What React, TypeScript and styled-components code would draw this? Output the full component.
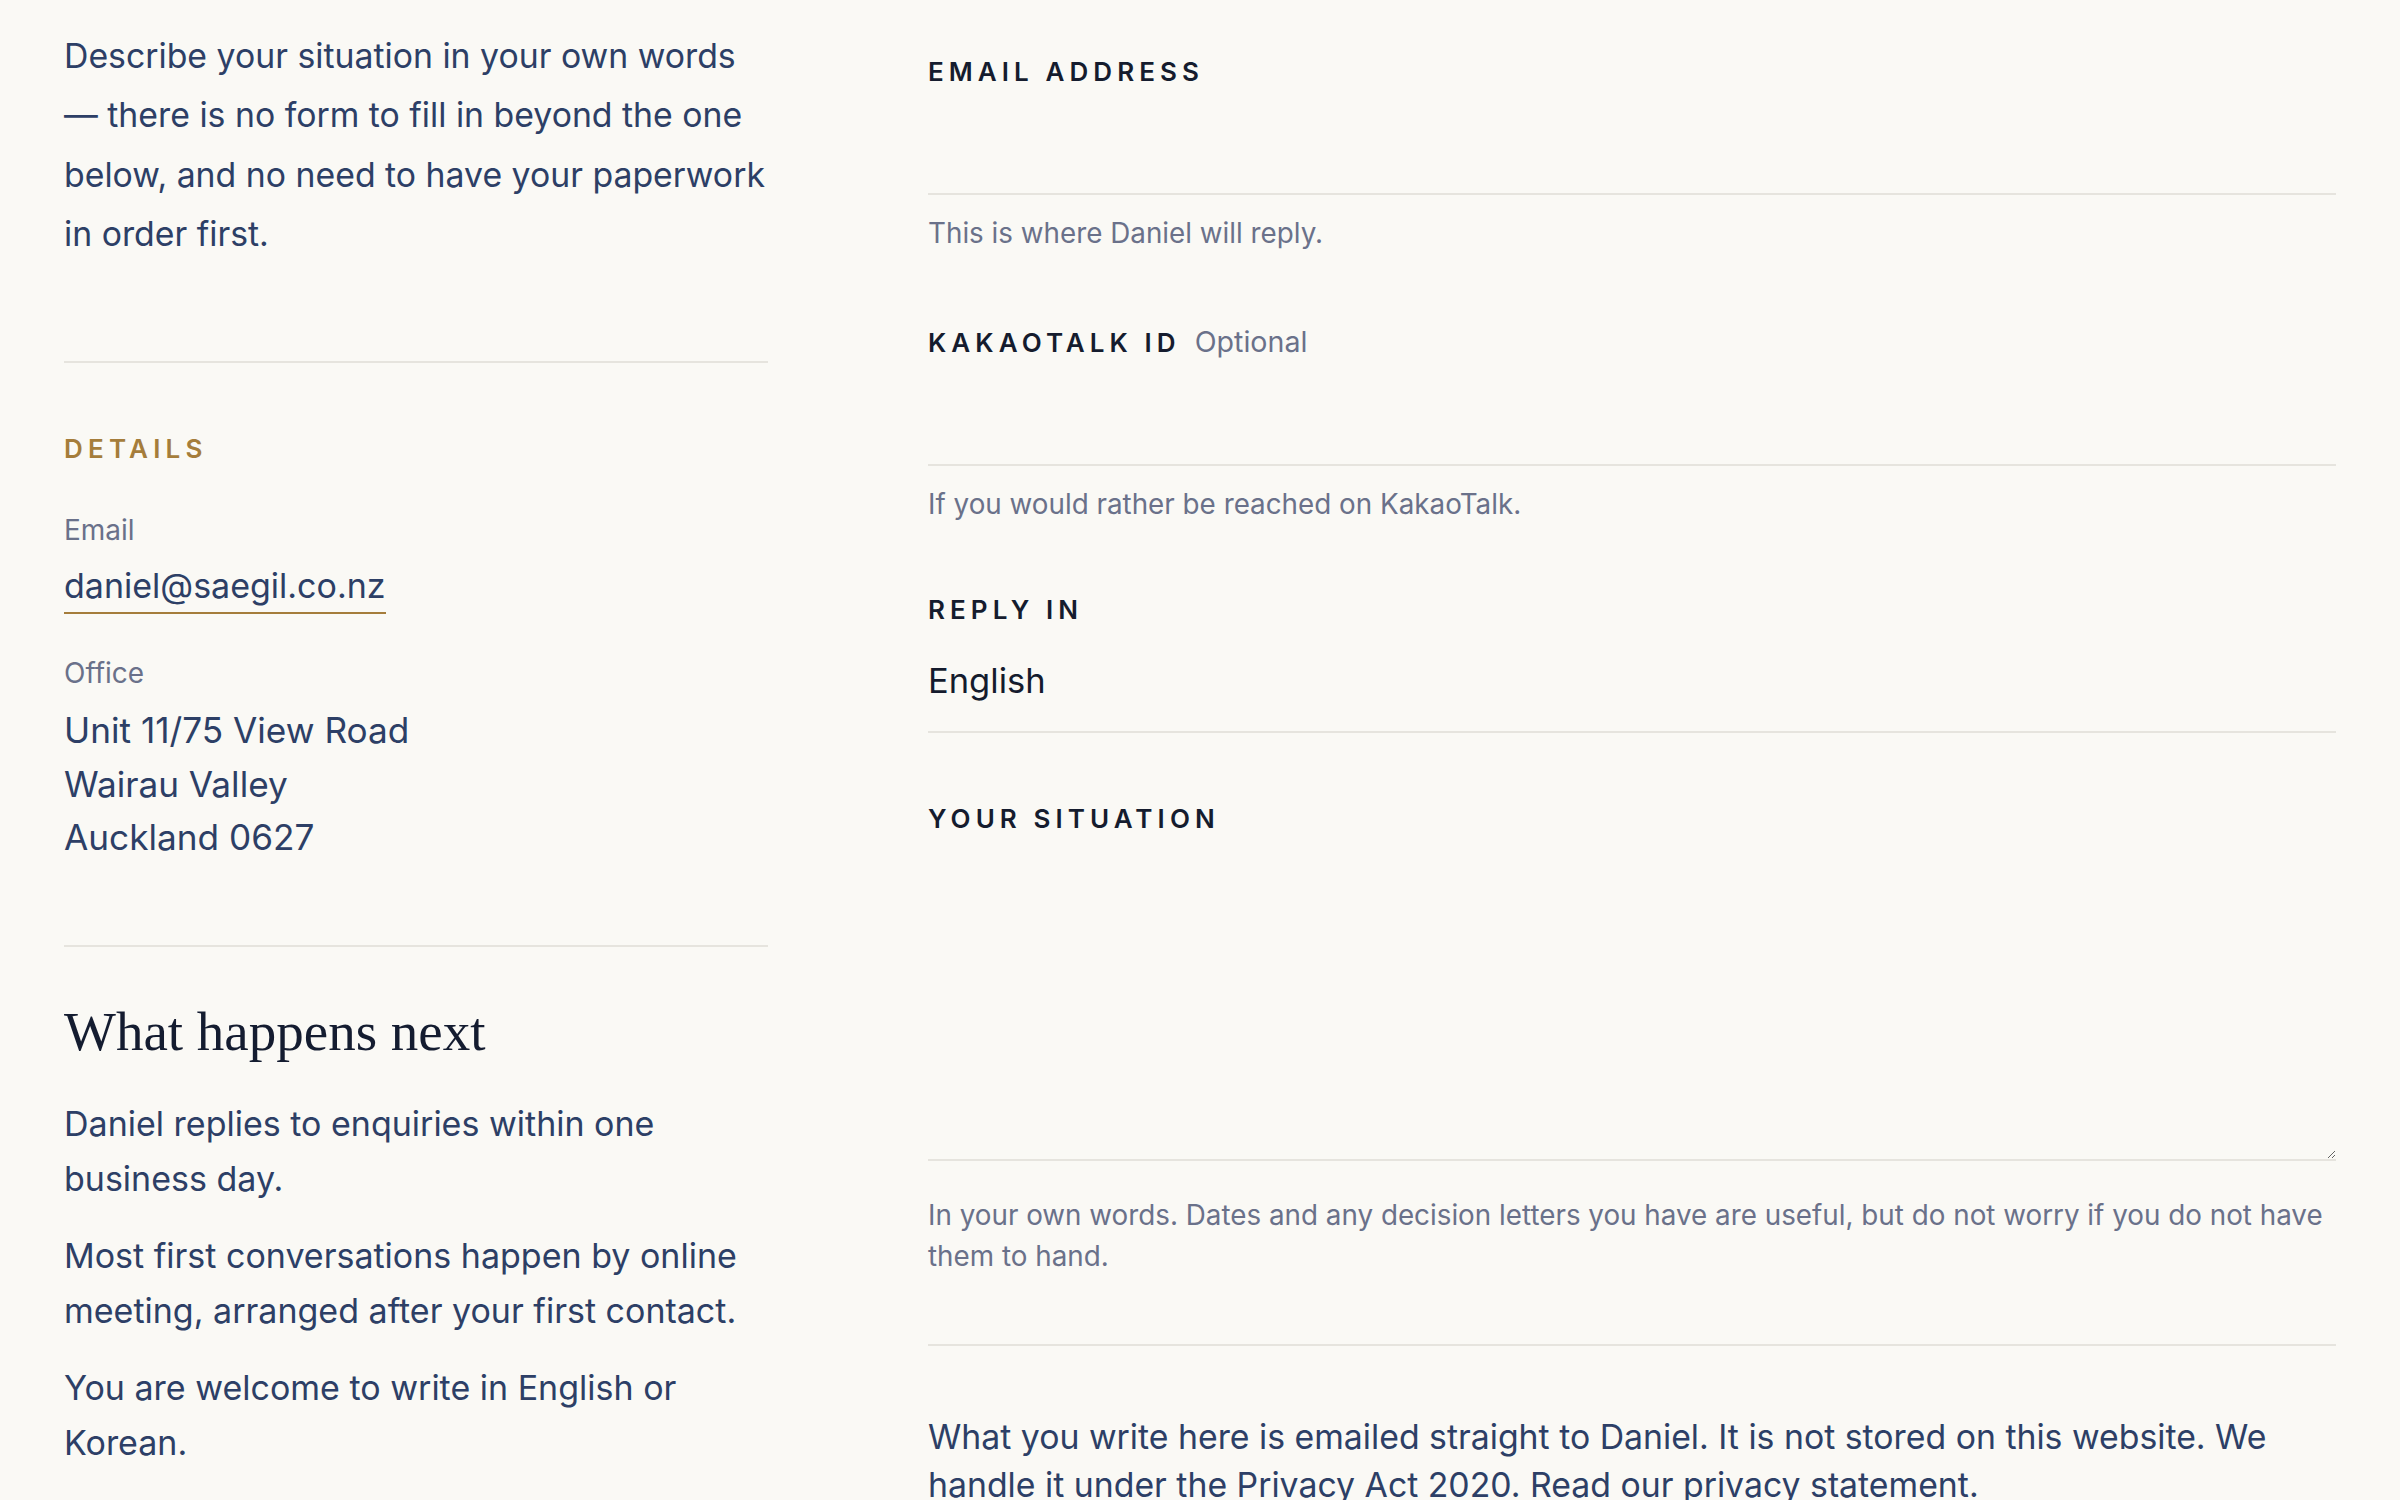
import React from "react";
import styled, { createGlobalStyle } from "styled-components";

const GlobalStyle = createGlobalStyle`
  *, *::before, *::after { box-sizing: border-box; }
  html, body { margin: 0; padding: 0; }
  body {
    background: #faf9f5;
    font-family: Inter, "Noto Sans", sans-serif;
    color: #2d3f66;
    -webkit-font-smoothing: antialiased;
  }
`;

const Page = styled.main`
  display: grid;
  grid-template-columns: 1fr 2fr;
  column-gap: 160px;
  padding: 26px 64px 0;
  align-items: start;
`;

const Aside = styled.aside`
  display: flex;
  flex-direction: column;
`;

const Intro = styled.p`
  margin: 0;
  font-size: 33.8px;
  line-height: 59.25px;
  color: #2d3f66;
`;

const Rule = styled.hr<{ $before: number; $after: number }>`
  border: 0;
  height: 2px;
  background: #e6e4de;
  margin: ${(p) => p.$before}px 0 ${(p) => p.$after}px;
  width: 100%;
`;

const Eyebrow = styled.h3`
  margin: 0;
  font-size: 26px;
  line-height: 31px;
  font-weight: 600;
  letter-spacing: 0.2em;
  text-transform: uppercase;
  color: #a57d3b;
`;

const Term = styled.div<{ $top: number }>`
  margin-top: ${(p) => p.$top}px;
  font-size: 28px;
  line-height: 41px;
  color: #6a718a;
`;

const MailLink = styled.a`
  display: block;
  width: fit-content;
  margin-top: 11px;
  font-size: 34px;
  line-height: 48px;
  padding-bottom: 2px;
  color: #2d3f66;
  text-decoration: none;
  border-bottom: 2px solid #a57d3b;
`;

const Address = styled.address`
  margin-top: 10px;
  font-style: normal;
  font-size: 35.2px;
  line-height: 53.5px;
  color: #2d3f66;
`;

const SerifHeading = styled.h2`
  margin: 0;
  font-family: "Liberation Serif", "DejaVu Serif", serif;
  font-weight: 400;
  font-size: 55px;
  line-height: 64.8px;
  color: #141c30;
`;

const NextPara = styled.p<{ $first?: boolean }>`
  margin: ${(p) => (p.$first ? 32 : 22)}px 0 0;
  font-size: 34px;
  line-height: 55px;
  color: #2d3f66;
`;

const Form = styled.form`
  display: flex;
  flex-direction: column;
  padding-top: 31px;
`;

const Field = styled.div<{ $gap?: number }>`
  display: flex;
  flex-direction: column;
  margin-bottom: ${(p) => p.$gap ?? 73}px;
`;

const LabelRow = styled.label`
  display: flex;
  align-items: baseline;
  gap: 14px;
`;

const LabelText = styled.span`
  font-size: 26px;
  line-height: 30px;
  font-weight: 600;
  letter-spacing: 0.195em;
  text-transform: uppercase;
  color: #151c2e;
`;

const Optional = styled.span`
  font-size: 28.6px;
  line-height: 30px;
  color: #6a718a;
`;

const inputBase = `
  display: block;
  width: 100%;
  margin: 8px 0 0;
  border: 0;
  border-bottom: 2px solid #e6e4de;
  border-radius: 0;
  background: transparent;
  font-family: Inter, "Noto Sans", sans-serif;
  font-size: 34.5px;
  line-height: 48px;
  color: #141b2d;
  outline: none;
`;

const TextInput = styled.input`
  ${inputBase}
  height: 100px;
  padding: 23px 0 27px;
`;

const Select = styled.select`
  ${inputBase}
  height: 100px;
  padding: 24px 0 26px;
  appearance: none;
  -webkit-appearance: none;
`;

const TextArea = styled.textarea`
  ${inputBase}
  height: 319px;
  padding: 23px 0;
  resize: vertical;
`;

const Helper = styled.p<{ $top?: number }>`
  margin: ${(p) => p.$top ?? 18}px 0 0;
  font-size: 27.8px;
  line-height: 41px;
  color: #6a718a;
`;

const Notice = styled.p`
  margin: 0;
  font-size: 33.8px;
  line-height: 48px;
  color: #2d3f66;
`;

const NoticeLink = styled.a`
  color: #2d3f66;
  text-decoration: none;
  border-bottom: 2px solid #a57d3b;
`;

export default function App() {
  return (
    <>
      <GlobalStyle />
      <Page>
        <Aside>
          <Intro>
            Describe your situation in your own words — there is no form to fill in
            beyond the one below, and no need to have your paperwork in order first.
          </Intro>
          <Rule $before={98} $after={70} />
          <Eyebrow>Details</Eyebrow>
          <Term $top={46}>Email</Term>
          <MailLink href="#">daniel@saegil.co.nz</MailLink>
          <Term $top={39}>Office</Term>
          <Address>
            Unit 11/75 View Road
            <br />
            Wairau Valley
            <br />
            Auckland 0627
          </Address>
          <Rule $before={80} $after={53} />
          <SerifHeading>What happens next</SerifHeading>
          <NextPara $first>Daniel replies to enquiries within one business day.</NextPara>
          <NextPara>
            Most first conversations happen by online meeting, arranged after your
            first contact.
          </NextPara>
          <NextPara>You are welcome to write in English or Korean.</NextPara>
        </Aside>

        <Form onSubmit={(e) => e.preventDefault()}>
          <Field>
            <LabelRow htmlFor="email">
              <LabelText>Email address</LabelText>
            </LabelRow>
            <TextInput id="email" type="email" />
            <Helper>This is where Daniel will reply.</Helper>
          </Field>
          <Field $gap={70}>
            <LabelRow htmlFor="kakao">
              <LabelText>KakaoTalk ID</LabelText>
              <Optional>Optional</Optional>
            </LabelRow>
            <TextInput id="kakao" type="text" />
            <Helper>If you would rather be reached on KakaoTalk.</Helper>
          </Field>
          <Field $gap={71}>
            <LabelRow htmlFor="lang">
              <LabelText>Reply in</LabelText>
            </LabelRow>
            <Select id="lang" defaultValue="en">
              <option value="en">English</option>
              <option value="ko">한국어</option>
            </Select>
          </Field>
          <Field $gap={0}>
            <LabelRow htmlFor="situation">
              <LabelText>Your situation</LabelText>
            </LabelRow>
            <TextArea id="situation" />
            <Helper $top={34}>
              In your own words. Dates and any decision letters you have are useful, but
              do not worry if you do not have them to hand.
            </Helper>
          </Field>
          <Rule $before={67} $after={67} />
          <Notice>
            What you write here is emailed straight to Daniel. It is not stored on this
            website. We handle it under the Privacy Act 2020.{" "}
            <NoticeLink href="#">Read our privacy statement</NoticeLink>.
          </Notice>
        </Form>
      </Page>
    </>
  );
}
